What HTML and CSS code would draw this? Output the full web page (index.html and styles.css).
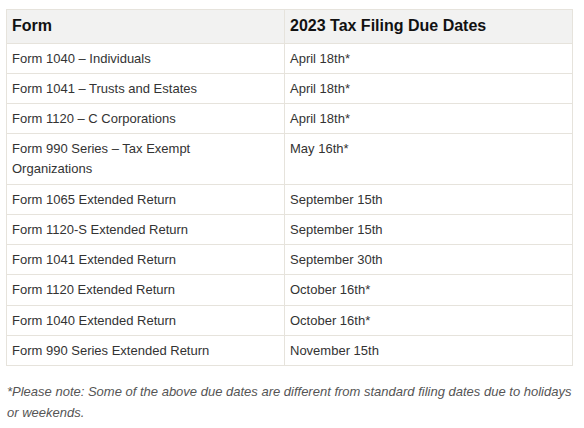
FILE: index.html
```html
<!DOCTYPE html>
<html>
<head>
<meta charset="utf-8">
<link rel="stylesheet" href="styles.css">
</head>
<body>
<div class="wrap">
  <table class="dates">
    <thead>
      <tr><th class="c1">Form</th><th class="c2">2023 Tax Filing Due Dates</th></tr>
    </thead>
    <tbody>
      <tr><td>Form 1040 – Individuals</td><td>April 18th*</td></tr>
      <tr><td>Form 1041 – Trusts and Estates</td><td>April 18th*</td></tr>
      <tr><td>Form 1120 – C Corporations</td><td>April 18th*</td></tr>
      <tr class="tall"><td>Form 990 Series – Tax Exempt<br>Organizations</td><td>May 16th*</td></tr>
      <tr><td>Form 1065 Extended Return</td><td>September 15th</td></tr>
      <tr><td>Form 1120-S Extended Return</td><td>September 15th</td></tr>
      <tr><td>Form 1041 Extended Return</td><td>September 30th</td></tr>
      <tr class="tall"><td>Form 1120 Extended Return</td><td>October 16th*</td></tr>
      <tr><td>Form 1040 Extended Return</td><td>October 16th*</td></tr>
      <tr><td>Form 990 Series Extended Return</td><td>November 15th</td></tr>
    </tbody>
  </table>
  <p class="note">*Please note: Some of the above due dates are different from standard filing dates due to holidays or weekends.</p>
</div>
</body>
</html>
```
FILE: styles.css
```css
html, body {
  margin: 0;
  padding: 0;
  background: #ffffff;
}
.wrap {
  padding: 9px 11px 0 6px;
  font-family: "Liberation Sans", Arial, sans-serif;
}
.dates {
  border-collapse: collapse;
  width: 567px;
  table-layout: fixed;
}
.dates th {
  background: #f2f2f1;
  color: #111111;
  font-size: 16px;
  font-weight: bold;
  text-align: left;
  line-height: 24px;
  padding: 4px 5px 5px 5px;
  border: 1px solid #e6e3dc;
}
.dates .c1 {
  width: 278px;
  box-sizing: border-box;
}
.dates td {
  color: #333333;
  font-size: 13px;
  line-height: 20px;
  padding: 5px 5px 4px 5px;
  vertical-align: top;
  border: 1px solid #e6e3dc;
}
.dates .tall td {
  padding-bottom: 5px;
}
.note {
  margin: 15px 0 0 1px;
  font-size: 13px;
  font-style: italic;
  line-height: 21px;
  color: #555555;
}
```
